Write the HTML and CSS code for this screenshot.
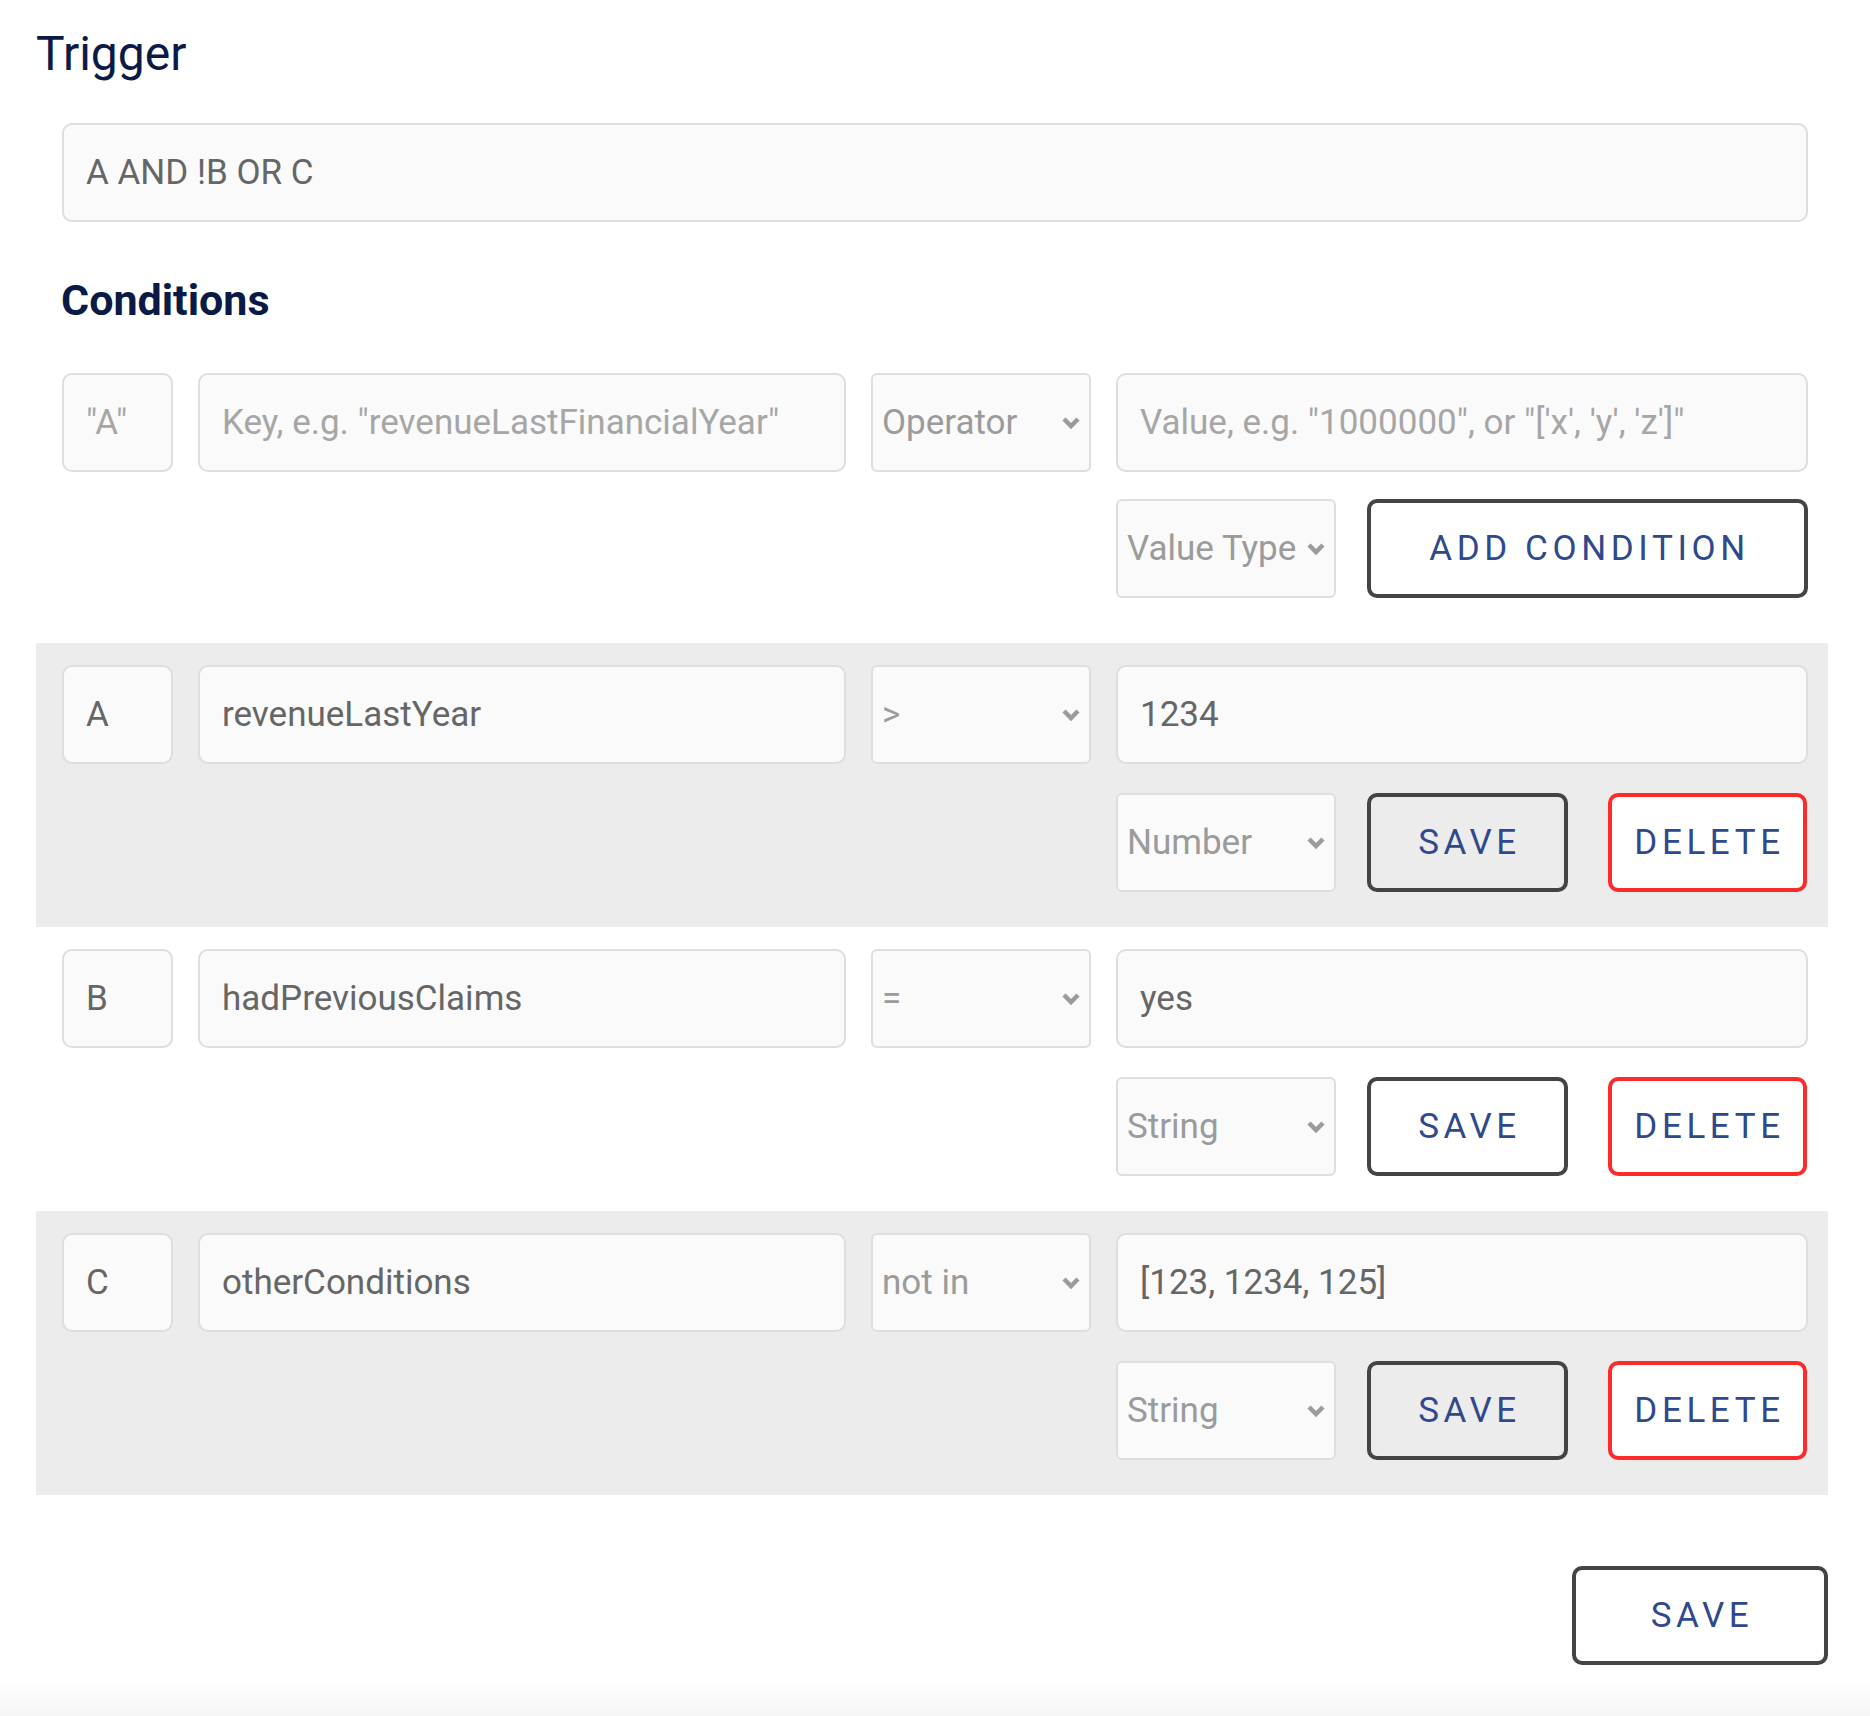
FILE: index.html
```html
<!DOCTYPE html>
<html lang="en">
<head>
<meta charset="utf-8">
<title>Trigger</title>
<link rel="stylesheet" href="styles.css">
</head>
<body>
<div class="page">
  <h1 class="title">Trigger</h1>
  <div class="trigger-wrap">
    <input class="field" type="text" value="A AND !B OR C">
  </div>

  <h2 class="subtitle">Conditions</h2>

  <div class="cond cond-new">
    <input class="field" type="text" placeholder="&quot;A&quot;">
    <input class="field" type="text" placeholder="Key, e.g. &quot;revenueLastFinancialYear&quot;">
    <div class="select"><span>Operator</span><svg class="chev" viewBox="0 0 20 14" width="20" height="14"><polyline points="3,3 10,10 17,3"/></svg></div>
    <input class="field" type="text" placeholder="Value, e.g. &quot;1000000&quot;, or &quot;['x', 'y', 'z']&quot;">
    <div class="actions">
      <div class="select type"><span>Value Type</span><svg class="chev" viewBox="0 0 20 14" width="20" height="14"><polyline points="3,3 10,10 17,3"/></svg></div>
      <button class="btn btn-add">ADD CONDITION</button>
    </div>
  </div>

  <div class="cond shaded">
    <input class="field" type="text" value="A">
    <input class="field" type="text" value="revenueLastYear">
    <div class="select"><span>&gt;</span><svg class="chev" viewBox="0 0 20 14" width="20" height="14"><polyline points="3,3 10,10 17,3"/></svg></div>
    <input class="field" type="text" value="1234">
    <div class="actions">
      <div class="select type"><span>Number</span><svg class="chev" viewBox="0 0 20 14" width="20" height="14"><polyline points="3,3 10,10 17,3"/></svg></div>
      <button class="btn btn-save">SAVE</button>
      <button class="btn btn-delete">DELETE</button>
    </div>
  </div>

  <div class="cond">
    <input class="field" type="text" value="B">
    <input class="field" type="text" value="hadPreviousClaims">
    <div class="select"><span>=</span><svg class="chev" viewBox="0 0 20 14" width="20" height="14"><polyline points="3,3 10,10 17,3"/></svg></div>
    <input class="field" type="text" value="yes">
    <div class="actions">
      <div class="select type"><span>String</span><svg class="chev" viewBox="0 0 20 14" width="20" height="14"><polyline points="3,3 10,10 17,3"/></svg></div>
      <button class="btn btn-save">SAVE</button>
      <button class="btn btn-delete">DELETE</button>
    </div>
  </div>

  <div class="cond shaded">
    <input class="field" type="text" value="C">
    <input class="field" type="text" value="otherConditions">
    <div class="select"><span>not in</span><svg class="chev" viewBox="0 0 20 14" width="20" height="14"><polyline points="3,3 10,10 17,3"/></svg></div>
    <input class="field" type="text" value="[123, 1234, 125]">
    <div class="actions">
      <div class="select type"><span>String</span><svg class="chev" viewBox="0 0 20 14" width="20" height="14"><polyline points="3,3 10,10 17,3"/></svg></div>
      <button class="btn btn-save">SAVE</button>
      <button class="btn btn-delete">DELETE</button>
    </div>
  </div>

  <div class="footer-actions">
    <button class="btn btn-final">SAVE</button>
  </div>
</div>
<div class="bottom-fade"></div>
</body>
</html>
```

FILE: styles.css
```css
* {
  box-sizing: border-box;
}

html, body {
  margin: 0;
  padding: 0;
  background: #ffffff;
}

body {
  font-family: Roboto, "Liberation Sans", Arial, sans-serif;
  color: #666666;
}

.page {
  padding: 0 42px 0 36px;
}

.title {
  margin: 30px 0 0 0;
  font-size: 48px;
  line-height: 48px;
  font-weight: 400;
  color: #0c1a48;
}

.trigger-wrap {
  margin: 45px 20px 0 26px;
}

.subtitle {
  margin: 57px 0 0 25px;
  font-size: 43px;
  line-height: 43px;
  font-weight: 700;
  color: #0a1a46;
}

.field {
  display: block;
  width: 100%;
  height: 99px;
  padding: 0 22px;
  font-family: Roboto, "Liberation Sans", Arial, sans-serif;
  font-size: 35px;
  color: #666666;
  background: #fafafa;
  border: 2px solid #dedede;
  border-radius: 10px;
  outline: none;
}

.field::placeholder {
  color: #a6a6a6;
}

.cond {
  display: grid;
  grid-template-columns: 111px 648px 220px 1fr;
  column-gap: 25px;
  row-gap: 29px;
  padding: 22px 20px 35px 26px;
}

.cond-new {
  margin-top: 51px;
  padding: 0 20px 0 26px;
  row-gap: 27px;
}

.cond.cond-new + .cond {
  margin-top: 45px;
}

.shaded {
  background: #ececec;
}

.select {
  display: flex;
  align-items: center;
  justify-content: space-between;
  height: 99px;
  padding: 0 8px 0 9px;
  font-size: 35px;
  color: #9b9b9b;
  background: #fafafa;
  border: 2px solid #dedede;
  border-radius: 6px;
  white-space: nowrap;
}

.chev {
  flex: none;
  fill: none;
  stroke: #9b9b9b;
  stroke-width: 4.5;
  stroke-linecap: butt;
  stroke-linejoin: miter;
}

.actions {
  grid-column: 4;
  display: flex;
  align-items: stretch;
}

.actions .type {
  width: 220px;
  flex: none;
}

.btn {
  height: 99px;
  padding: 0 0 0 4px;
  font-family: Roboto, "Liberation Sans", Arial, sans-serif;
  font-size: 35px;
  font-weight: 400;
  letter-spacing: 4.6px;
  color: #2f4a8c;
  background: transparent;
  border: 4px solid #444444;
  border-radius: 10px;
  cursor: pointer;
}

.btn-add {
  flex: 1;
  margin-left: 31px;
  background: #ffffff;
}

.btn-save {
  width: 201px;
  margin-left: 31px;
}

.btn-delete {
  width: 199px;
  margin-left: 40px;
  background: #ffffff;
  border-color: #ff2b2b;
}

.footer-actions {
  display: flex;
  justify-content: flex-end;
  margin-top: 71px;
}

.btn-final {
  width: 256px;
  background: #ffffff;
}

.bottom-fade {
  margin-top: 16px;
  height: 35px;
  background: linear-gradient(to bottom, #ffffff, #f5f5f5);
}
```
